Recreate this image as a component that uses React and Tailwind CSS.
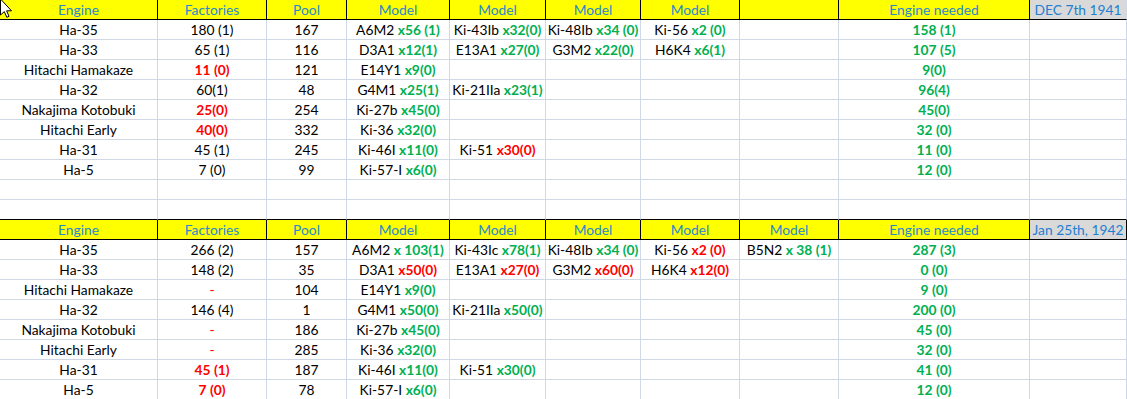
import React from "react";

const W = ["w-[158px]", "w-[109px]", "w-[80px]", "w-[103px]", "w-[96px]", "w-[95px]", "w-[99px]", "w-[99px]", "w-[191px]", "w-[97px]"];

const g = (t) => ({ t, c: "g" });
const r = (t) => ({ t, c: "r" });
const rn = (t) => ({ t, c: "rn" });

function Txt({ v }) {
  if (v == null) return null;
  if (typeof v === "string") return <>{v}</>;
  if (Array.isArray(v)) return v.map((p, i) => <Txt key={i} v={p} />);
  if (v.c === "g") return <span className="font-bold text-[#00b050]">{v.t}</span>;
  if (v.c === "r") return <span className="font-bold text-[#ff0000]">{v.t}</span>;
  return <span className="text-[#ff0000]">{v.t}</span>;
}

function Cell({ i, v, kind }) {
  let cls = "border-r border-b border-[#d0d7e5] bg-white text-black";
  if (kind === "head") cls = "border-r border-b border-black bg-[#ffff00] text-[#2a88cc]";
  if (kind === "date") cls = "border-r border-b border-[#d0d7e5] border-b-black bg-[#d9d9d9] text-[#1f7fd0]";
  if (kind === "date2") cls = "border-r border-b border-black bg-[#d9d9d9] text-[#1f7fd0]";
  if (kind === "pre") cls = "border-r border-b border-[#d0d7e5] border-b-black bg-white";
  return (
    <div className={`${W[i]} h-[20px] shrink-0 ${cls} flex items-center justify-center whitespace-pre overflow-visible leading-[19px]`}>
      <span className="whitespace-pre">
        <Txt v={v} />
      </span>
    </div>
  );
}

function Row({ cells, kind }) {
  return (
    <div className="flex">
      {cells.map((v, i) => {
        let k = kind;
        if (kind === "head" && i === 9) k = cells.dateKind;
        return <Cell key={i} i={i} v={v} kind={k} />;
      })}
    </div>
  );
}

function head(date, dateKind) {
  const a = ["Engine", "Factories", "Pool", "Model", "Model", "Model", "Model", dateKind === "date2" ? "Model" : "", "Engine needed", date];
  a.dateKind = dateKind;
  return a;
}

const t1 = [
  ["Ha-35", "180 (1)", "167", ["A6M2 ", g("x56 (1)")], ["Ki-43Ib ", g("x32(0)")], ["Ki-48Ib ", g("x34 (0)")], ["Ki-56 ", g("x2 (0)")], "", g("158 (1)"), ""],
  ["Ha-33", "65 (1)", "116", ["D3A1 ", g("x12(1)")], ["E13A1 ", g("x27(0)")], ["G3M2 ", g("x22(0)")], ["H6K4 ", g("x6(1)")], "", g("107 (5)"), ""],
  ["Hitachi Hamakaze", r("11 (0)"), "121", ["E14Y1 ", g("x9(0)")], "", "", "", "", g("9(0)"), ""],
  ["Ha-32", "60(1)", "48", ["G4M1 ", g("x25(1)")], ["Ki-21IIa ", g("x23(1)")], "", "", "", g("96(4)"), ""],
  ["Nakajima Kotobuki", r("25(0)"), "254", ["Ki-27b ", g("x45(0)")], "", "", "", "", g("45(0)"), ""],
  ["Hitachi Early", r("40(0)"), "332", ["Ki-36 ", g("x32(0)")], "", "", "", "", g("32 (0)"), ""],
  ["Ha-31", "45 (1)", "245", ["Ki-46I ", g("x11(0)")], ["Ki-51 ", r("x30(0)")], "", "", "", g("11 (0)"), ""],
  ["Ha-5", "7 (0)", "99", ["Ki-57-I ", g("x6(0)")], "", "", "", "", g("12 (0)"), ""],
];

const t2 = [
  ["Ha-35", "266 (2)", "157", ["A6M2 ", g("x 103(1)")], ["Ki-43Ic ", g("x78(1)")], ["Ki-48Ib ", g("x34 (0)")], ["Ki-56 ", r("x2 (0)")], ["B5N2 ", g("x 38 (1)")], g("287 (3)"), ""],
  ["Ha-33", "148 (2)", "35", ["D3A1 ", r("x50(0)")], ["E13A1 ", r("x27(0)")], ["G3M2 ", r("x60(0)")], ["H6K4 ", r("x12(0)")], "", g("0 (0)"), ""],
  ["Hitachi Hamakaze", rn("-"), "104", ["E14Y1 ", g("x9(0)")], "", "", "", "", g("9 (0)"), ""],
  ["Ha-32", "146 (4)", "1", ["G4M1 ", g("x50(0)")], ["Ki-21IIa ", g("x50(0)")], "", "", "", g("200 (0)"), ""],
  ["Nakajima Kotobuki", rn("-"), "186", ["Ki-27b ", g("x45(0)")], "", "", "", "", g("45 (0)"), ""],
  ["Hitachi Early", rn("-"), "285", ["Ki-36 ", g("x32(0)")], "", "", "", "", g("32 (0)"), ""],
  ["Ha-31", r("45 (1)"), "187", ["Ki-46I ", g("x11(0)")], ["Ki-51 ", g("x30(0)")], "", "", "", g("41 (0)"), ""],
  ["Ha-5", r("7 (0)"), "78", ["Ki-57-I ", g("x6(0)")], "", "", "", "", g("12 (0)"), ""],
];

const empty = ["", "", "", "", "", "", "", "", "", ""];

export default function App() {
  return (
    <div className="relative w-[1127px] h-[399px] overflow-hidden bg-white font-['Lato',sans-serif] text-[13.8px]">
      <Row cells={head("DEC 7th 1941", "date")} kind="head" />
      {t1.map((c, i) => (
        <Row key={i} cells={c} kind="body" />
      ))}
      <Row cells={empty} kind="body" />
      <Row cells={empty} kind="pre" />
      <Row cells={head("Jan 25th, 1942", "date2")} kind="head" />
      {t2.map((c, i) => (
        <Row key={i} cells={c} kind="body" />
      ))}
      <svg className="absolute left-0 top-0" width="13" height="19" viewBox="0 0 13 19">
        <path d="M0.5 -1 L0.5 15 L4.3 11.6 L6.8 17.3 L9 16.3 L6.6 10.8 L11.5 10.8 Z" fill="white" stroke="black" strokeWidth="1" strokeLinejoin="miter" />
      </svg>
    </div>
  );
}
